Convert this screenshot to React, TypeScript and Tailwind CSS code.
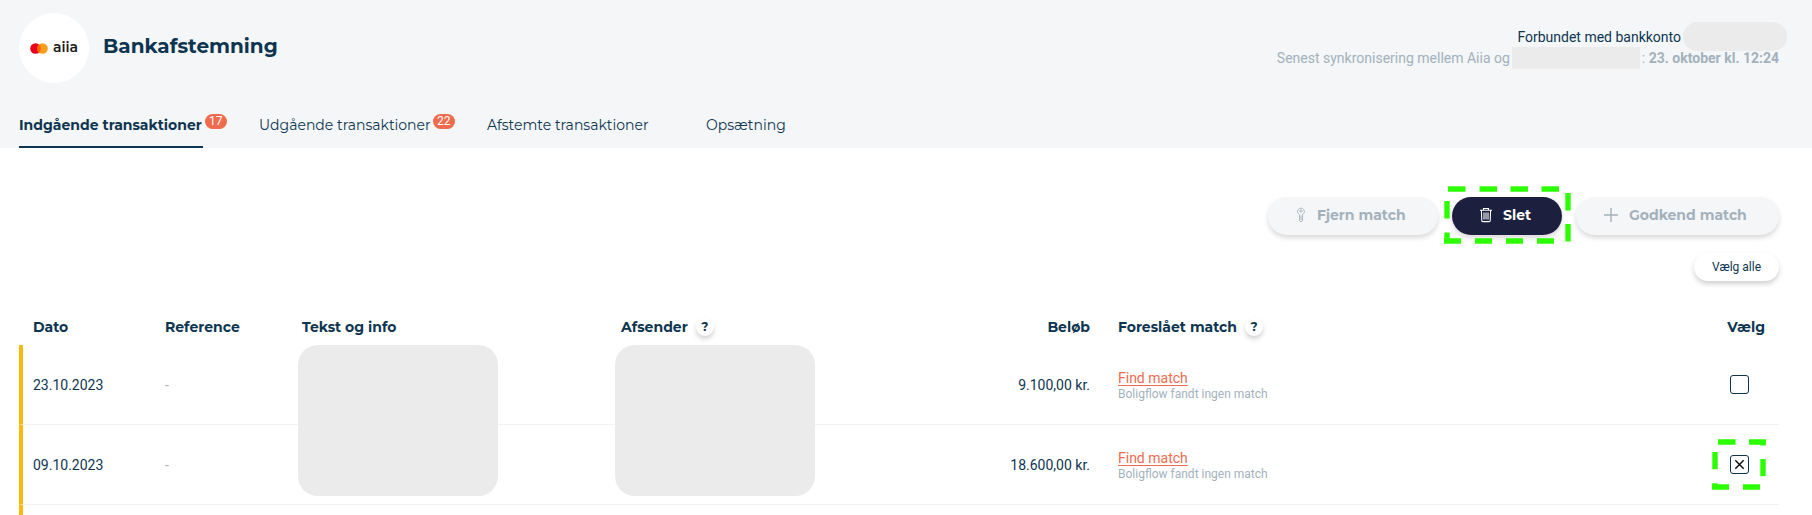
import { ReactNode, useState } from 'react';

const TABS = [
  { label: 'Indgående transaktioner', count: 17, width: 'w-[184px]' },
  { label: 'Udgående transaktioner', count: 22, width: 'w-[172px]' },
  { label: 'Afstemte transaktioner', width: 'w-[163px]' },
  { label: 'Opsætning', width: 'w-20' },
];

const HEADING = "font-['Montserrat','Inter',sans-serif]";

function Logo() {
  return (
    <div className="flex size-[70px] items-center justify-center gap-[5px] rounded-full bg-white">
      <svg className="h-[11px] w-[18px]" viewBox="0 0 18 11" aria-hidden="true">
        <circle cx="5.5" cy="5.5" r="5.3" fill="#eb001b" />
        <circle cx="12.5" cy="5.5" r="5.3" fill="#f79e1b" />
        <path d="M9 1.5a5.3 5.3 0 0 1 0 8a5.3 5.3 0 0 1 0-8z" fill="#ff5f00" />
      </svg>
      <span className={`${HEADING} pb-0.5 text-sm leading-4 font-semibold text-[#1a1a1a]`}>aiia</span>
    </div>
  );
}

function KeyIcon() {
  return (
    <svg className="h-4 w-2.5" viewBox="2 0 10 16" fill="none" stroke="currentColor" strokeWidth="0.9" aria-hidden="true">
      <path d="M5.5 7.6a3.4 3.4 0 1 1 3 0v6L7 15l-1.5-1.4zM7 8.6v4.6" />
      <circle cx="7" cy="4" r="1.1" />
    </svg>
  );
}

function TrashIcon() {
  return (
    <svg className="h-4 w-3" viewBox="1 0 12 16" fill="none" stroke="currentColor" strokeWidth="1.1" aria-hidden="true">
      <path d="M1 3.3h12M4.5 3.3V1.5h5v1.8M2.4 3.3l.4 10.4q.1.9 1 .9h6.4q.9 0 1-.9l.4-10.4M5 5.5v7M7 5.5v7M9 5.5v7" />
    </svg>
  );
}

function PlusIcon() {
  return (
    <svg className="size-3.5" viewBox="0 0 14 14" stroke="currentColor" strokeWidth="1.4" aria-hidden="true">
      <path d="M7 0v14M0 7h14" />
    </svg>
  );
}

function ActionButton({ icon, label, width, disabled }: { icon: ReactNode; label: string; width: string; disabled?: boolean }) {
  return (
    <button
      type="button"
      disabled={disabled}
      className={`${HEADING} ${width} flex h-[38px] items-center gap-[11px] rounded-full pb-0.5 pl-7 text-sm font-bold whitespace-nowrap shadow-[0_3px_5px_rgba(0,0,0,0.15)] ${
        disabled ? 'bg-[#f4f6f8] text-[#a3b1bc]' : 'bg-[#1c1f3d] text-white'
      }`}
    >
      {icon}
      {label}
    </button>
  );
}

function Help({ label }: { label: string }) {
  return (
    <button
      type="button"
      aria-label={label}
      className="flex size-[18px] items-center justify-center rounded-full bg-white text-xs font-bold shadow-[0_3px_5px_rgba(0,0,0,0.18)]"
    >
      ?
    </button>
  );
}

function Row({ date, amount, checked, onToggle, masks, marked }: {
  date: string;
  amount: string;
  checked: boolean;
  onToggle: () => void;
  masks?: boolean;
  marked?: boolean;
}) {
  const line = 'border-b border-[#f1f2f4]';
  return (
    <tr className="h-20">
      <td className={`${line} border-l-4 border-l-[#fdb90b] pl-2.5`}>{date}</td>
      <td className={`${line} pl-3.5 text-[#a3b1bc]`}>-</td>
      <td className={`${line} relative`}>
        {masks && <div className="absolute top-0 left-2.5 z-10 h-[151px] w-[200px] rounded-[20px] bg-[#ebebeb]" />}
      </td>
      <td className={`${line} relative`}>
        {masks && <div className="absolute top-0 left-2 z-10 h-[151px] w-[200px] rounded-[20px] bg-[#ebebeb]" />}
      </td>
      <td className={`${line} pr-3.5 text-right`}>{amount}</td>
      <td className={`${line} pl-3.5`}>
        <a href="#match" className="block leading-[18px] text-[#ee6c4d] underline underline-offset-2">Find match</a>
        <span className="block text-xs leading-[14px] text-[#a3b1bc]">Boligflow fandt ingen match</span>
      </td>
      <td className={`${line} pr-[30px]`}>
        <div className="relative ml-auto size-[19px]">
          <input
            type="checkbox"
            aria-label={`Vælg ${date}`}
            checked={checked}
            onChange={onToggle}
            className="block size-[19px] appearance-none rounded-[3px] border border-[#0d3550] bg-white"
          />
          {checked && (
            <svg className="pointer-events-none absolute inset-0 size-[19px]" viewBox="0 0 19 19" stroke="#111" strokeWidth="1.5" aria-hidden="true">
              <path d="M5.3 5.3l8.4 8.4M13.7 5.3l-8.4 8.4" />
            </svg>
          )}
          {marked && (
            <svg className="pointer-events-none absolute -top-4 -left-[18px] h-[51px] w-[54px]" viewBox="0 0 54 51" fill="none" stroke="#2bff00" strokeWidth="5.4" aria-hidden="true">
              <path d="M6 3h17.5M37 3h17M51 .3v6.2M51 20v17.3M0 48h17M31 48h17M3 13v17.3M3 44.3v6.4" />
            </svg>
          )}
        </div>
      </td>
    </tr>
  );
}

export default function App() {
  const [tab, setTab] = useState(0);
  const [picked, setPicked] = useState([false, true]);
  const toggle = (i: number) => setPicked(picked.map((p, n) => (n === i ? !p : p)));

  return (
    <div className="bg-white font-['Roboto',sans-serif] text-sm text-[#0d3550]">
      <header className="bg-[#f4f6f8] pt-[13px] pr-[33px] pl-[19px]">
        <div className="flex items-start justify-between">
          <div className="flex items-center gap-3.5">
            <Logo />
            <h1 className={`${HEADING} pb-1 text-xl leading-7 font-bold`}>Bankafstemning</h1>
          </div>
          <div className="pt-[9px] text-right">
            <p className="-mr-2 flex h-[29px] items-center justify-end gap-0.5">
              Forbundet med bankkonto
              <span className="h-[29px] w-[104px] rounded-full bg-[#ebebeb]" />
            </p>
            <p className="-mt-1 flex h-[22px] items-center justify-end gap-0.5 text-[#a3b1bc]">
              Senest synkronisering mellem Aiia og
              <span className="h-[22px] w-32 bg-[#ebebeb]" />
              <span>: <b className="font-bold">23. oktober kl. 12:24</b></span>
            </p>
          </div>
        </div>
        <nav className="mt-[27px] flex gap-14">
          {TABS.map((t, i) => (
            <button
              key={t.label}
              type="button"
              onClick={() => setTab(i)}
              className={`${HEADING} ${t.width} relative h-[38px] border-b-2 pb-1.5 text-left whitespace-nowrap ${
                i === tab ? 'border-[#0d3550] font-bold' : 'border-transparent'
              }`}
            >
              {t.label}
              {t.count && (
                <span className="absolute top-1 left-full ml-0.5 h-[15px] rounded-full bg-[#ee6c4d] px-1 font-['Roboto',sans-serif] text-xs leading-[15px] font-normal text-white">
                  {t.count}
                </span>
              )}
            </button>
          ))}
        </nav>
      </header>

      <main className="pr-[33px] pl-[19px]">
        <div className="flex justify-end gap-3.5 pt-[49px]">
          <ActionButton disabled icon={<KeyIcon />} label="Fjern match" width="w-[170px]" />
          <div className="relative">
            <ActionButton icon={<TrashIcon />} label="Slet" width="w-[110px]" />
            <svg className="pointer-events-none absolute -top-[11px] -left-2 h-[58px] w-[127px]" viewBox="0 0 127 58" fill="none" stroke="#2bff00" strokeWidth="5.4" aria-hidden="true">
              <path d="M4 3h17.5M35.5 3h17.5M66.5 3h17.5M97.5 3h17.5M124 7v17.5M124 38v17.5M0 55h17M31 55h17M62 55h17M93 55h17M3 15v17.5M3 46.5v11" />
            </svg>
          </div>
          <ActionButton disabled icon={<PlusIcon />} label="Godkend match" width="w-[203px]" />
        </div>
        <div className="flex justify-end pt-[18px]">
          <button type="button" className="h-7 w-[85px] rounded-full bg-white text-xs shadow-[0_3px_5px_rgba(0,0,0,0.18)]">
            Vælg alle
          </button>
        </div>

        <table className="mt-[27px] w-full table-fixed border-separate border-spacing-0">
          <colgroup>
            <col className="w-[132px]" />
            <col className="w-[137px]" />
            <col className="w-[319px]" />
            <col className="w-[343px]" />
            <col className="w-[154px]" />
            <col />
            <col className="w-[140px]" />
          </colgroup>
          <thead className={HEADING}>
            <tr className="h-[37px] text-left">
              <th className="pl-3.5">Dato</th>
              <th className="pl-3.5">Reference</th>
              <th className="pl-3.5">Tekst og info</th>
              <th className="pl-3.5"><span className="flex items-center gap-2">Afsender <Help label="Om afsender" /></span></th>
              <th className="pr-3.5 text-right">Beløb</th>
              <th className="pl-3.5"><span className="flex items-center gap-2">Foreslået match <Help label="Om foreslået match" /></span></th>
              <th className="pr-3.5 text-right">Vælg</th>
            </tr>
          </thead>
          <tbody>
            <Row date="23.10.2023" amount="9.100,00 kr." checked={picked[0]} onToggle={() => toggle(0)} masks />
            <Row date="09.10.2023" amount="18.600,00 kr." checked={picked[1]} onToggle={() => toggle(1)} marked />
            <tr className="h-2.5">
              <td className="border-l-4 border-l-[#fdb90b]" />
              <td colSpan={6} />
            </tr>
          </tbody>
        </table>
      </main>
    </div>
  );
}
